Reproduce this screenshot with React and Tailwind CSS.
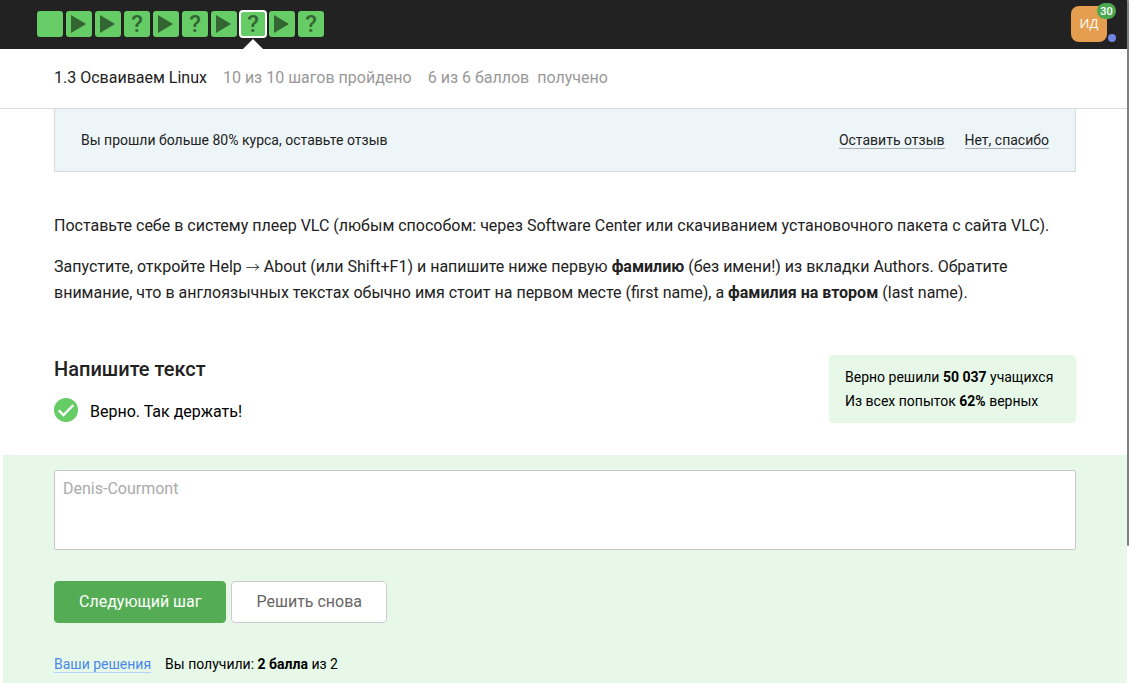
const steps = [
  { kind: "text" },
  { kind: "video" },
  { kind: "video" },
  { kind: "quiz" },
  { kind: "video" },
  { kind: "quiz" },
  { kind: "video" },
  { kind: "quiz", active: true },
  { kind: "video" },
  { kind: "quiz" },
];

const stepNames = { text: "Текст", video: "Видео", quiz: "Задача" };

function Step({ kind, active, number }) {
  return (
    <li className="relative">
      <a
        href={`#step-${number}`}
        aria-label={`Шаг ${number}: ${stepNames[kind]}`}
        aria-current={active ? "step" : undefined}
        className={
          active
            ? "flex size-[26px] items-center justify-center rounded-[3px] bg-[#66cc66] outline-2 -outline-offset-1 outline-white"
            : "flex size-[26px] items-center justify-center rounded-[3px] bg-[#66cc66]"
        }
      >
        {kind === "video" && (
          <svg viewBox="0 0 26 26" className="size-[26px] fill-[#336633]" aria-hidden="true">
            <path d="M5 4 20 13 5 22z" />
          </svg>
        )}
        {kind === "quiz" && (
          <span className="text-2xl/[26px] font-medium text-[#336633]">?</span>
        )}
      </a>
      {active && (
        <svg
          viewBox="0 0 20 10"
          className="absolute top-7 left-1/2 h-[10px] w-5 -translate-x-1/2 fill-white"
          aria-hidden="true"
        >
          <path d="M10 0 20 10H0z" />
        </svg>
      )}
    </li>
  );
}

function TopBar() {
  return (
    <header className="flex h-[49px] items-center justify-between bg-[#222222] pr-5 pb-px pl-[37px]">
      <nav aria-label="Шаги урока">
        <ol className="flex gap-[3px]">
          {steps.map((step, i) => (
            <Step key={i} number={i + 1} {...step} />
          ))}
        </ol>
      </nav>
      <button
        type="button"
        aria-label="Профиль"
        className="relative size-9 rounded-lg bg-[#e59e50] font-['Open_Sans',sans-serif] text-[13px] text-white"
      >
        ИД
        <span className="absolute -top-[3px] -right-[9px] h-4 w-[19px] rounded-full bg-[#4ba850] text-center font-['Roboto',sans-serif] text-[11px]/[17px] font-medium">
          30
        </span>
        <span className="absolute -right-[9px] bottom-0 size-2 rounded-full bg-[#7284e4]" />
      </button>
    </header>
  );
}

export default function App() {
  return (
    <div className="flex min-h-screen bg-white font-['Roboto',sans-serif] text-base text-[#222222]">
      <div className="flex min-w-0 flex-1 flex-col">
        <TopBar />
        <div className="flex h-[60px] items-center border-b border-[#d8d9db] pb-[2px] pl-[54px] text-[#999999]">
          <h1 className="mr-4 text-[#222222]">1.3 Осваиваем Linux</h1>
          <span className="mr-4">10 из 10 шагов пройдено</span>
          <span className="mr-2">6 из 6 баллов</span>
          <span>получено</span>
        </div>

        <main className="ml-[3px] flex flex-1 flex-col">
          <div className="px-[51px]">
            <aside className="flex h-[63px] items-center justify-between border border-t-0 border-[#d8d9db] bg-[#edf5f8] px-[26px] text-sm">
              <p>Вы прошли больше 80% курса, оставьте отзыв</p>
              <div className="flex gap-5">
                <a href="#review" className="border-b border-[#a8afb2] leading-4">Оставить отзыв</a>
                <a href="#dismiss" className="border-b border-[#a8afb2] leading-4">Нет, спасибо</a>
              </div>
            </aside>

            <div className="mt-[41px] space-y-[15px] leading-[26px]">
              <p>
                Поставьте себе в систему плеер VLC (любым способом: через Software Center или
                скачиванием установочного пакета с сайта VLC).
              </p>
              <p>
                Запустите, откройте Help{" "}
                <span className="font-['Noto_Sans_CJK_JP',sans-serif] text-sm/4 font-light">→</span>{" "}
                About (или Shift+F1) и напишите ниже первую <b>фамилию</b> (без имени!) из вкладки
                Authors. Обратите внимание, что в англоязычных текстах обычно имя стоит на первом
                месте (first name), а <b>фамилия на втором</b> (last name).
              </p>
            </div>

            <section className="mt-[49px] flex items-start justify-between pb-[29px]">
              <div className="text-black">
                <h2 className="text-xl/7 font-medium text-[#222222]">Напишите текст</h2>
                <p className="mt-[15px] flex items-start gap-3 leading-7">
                  <svg viewBox="0 0 24 24" className="size-6" aria-hidden="true">
                    <circle cx="12" cy="12" r="12" fill="#66cc66" />
                    <path d="M4.7 12.3 9.5 17 19.4 7" fill="none" stroke="#fff" strokeWidth="2.4" />
                  </svg>
                  Верно. Так держать!
                </p>
              </div>
              <div className="min-w-[247px] rounded bg-[#e7f8e8] px-4 py-[10px] text-sm/6 text-black">
                <p>Верно решили <b>50 037</b> учащихся</p>
                <p>Из всех попыток <b>62%</b> верных</p>
              </div>
            </section>
          </div>

          <form className="flex-1 bg-[#e7f8e8] px-[51px] pt-[15px] pb-2" onSubmit={(e) => e.preventDefault()}>
            <textarea
              disabled
              aria-label="Ваш ответ"
              defaultValue="Denis-Courmont"
              className="block h-20 w-full resize-none rounded-xs border border-[#c8c8c8] bg-white px-2 py-[6px] text-base text-[#aaaaaa]"
            />
            <div className="mt-[31px] flex gap-[5px]">
              <button type="submit" className="h-[42px] rounded border border-[#54ad54] bg-[#54ad54] px-6 text-white">
                Следующий шаг
              </button>
              <button type="button" className="h-[42px] rounded border border-[#cccccc] bg-white px-6 text-[#666666]">
                Решить снова
              </button>
            </div>
            <div className="mt-[33px] flex gap-[14px] text-sm/4 text-black">
              <a href="#submissions" className="border-b border-[#aed4fb] text-[#4a88e8]">Ваши решения</a>
              <p>
                Вы получили: <b>2 балла</b> из 2
              </p>
            </div>
          </form>
        </main>
      </div>
      <div className="w-[2px] shrink-0 bg-white" aria-hidden="true">
        <div className="h-[80vh] rounded-full bg-[#7c8280]" />
      </div>
    </div>
  );
}
